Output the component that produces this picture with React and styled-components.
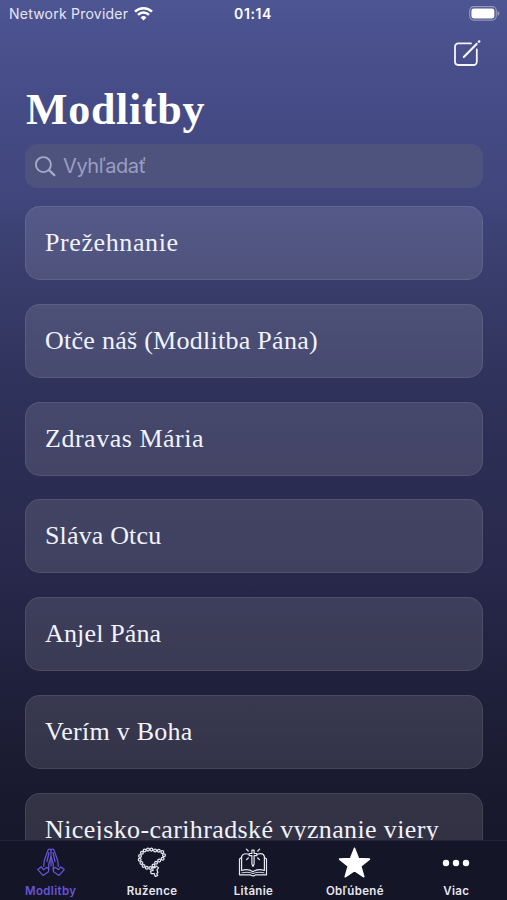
import styled, { createGlobalStyle } from 'styled-components'

const prayers = [
    { title: 'Prežehnanie', spacing: 0.6 },
    { title: 'Otče náš (Modlitba Pána)', spacing: 0.27 },
    { title: 'Zdravas Mária', spacing: 0.52 },
    { title: 'Sláva Otcu', spacing: 0.15 },
    { title: 'Anjel Pána', spacing: 0.15 },
    { title: 'Verím v Boha', spacing: 0.27 },
    { title: 'Nicejsko-carihradské vyznanie viery', spacing: 0.37 },
]

const tabs = [
    { label: 'Modlitby', Icon: HandsIcon, active: true },
    { label: 'Ružence', Icon: RosaryIcon },
    { label: 'Litánie', Icon: BookIcon },
    { label: 'Obľúbené', Icon: StarIcon },
    { label: 'Viac', Icon: DotsIcon },
]

export default function App() {
    return (
        <>
            <GlobalStyle />
            <Screen>
                <StatusBar>
                    <Carrier>
                        <span>Network Provider</span>
                        <WifiIcon />
                    </Carrier>
                    <Clock>01:14</Clock>
                    <Battery>
                        <BatteryIcon />
                    </Battery>
                </StatusBar>
                <NavBar>
                    <ComposeIcon />
                </NavBar>
                <Title>Modlitby</Title>
                <SearchField>
                    <SearchIcon />
                    <span>Vyhľadať</span>
                </SearchField>
                <PrayerList>
                    {prayers.map(prayer => (
                        <PrayerCard key={prayer.title} $spacing={prayer.spacing}>
                            <span>{prayer.title}</span>
                        </PrayerCard>
                    ))}
                </PrayerList>
                <TabBar>
                    {tabs.map(({ label, Icon, active }) => (
                        <Tab key={label} $active={active}>
                            <TabIcon>
                                <Icon />
                            </TabIcon>
                            <span>{label}</span>
                        </Tab>
                    ))}
                </TabBar>
            </Screen>
        </>
    )
}

function WifiIcon() {
    return (
        <svg width="19" height="15" viewBox="0 0 19 15" fill="none" stroke="#fff" strokeWidth="2.5">
            <path d="M1 5.6a12.2 12.2 0 0 1 17 0" />
            <path d="M4 8.8a7.8 7.8 0 0 1 11 0" />
            <path d="M9.5 14.4L6.6 11.4a4.1 4.1 0 0 1 5.8 0z" fill="#fff" stroke="none" />
        </svg>
    )
}

function BatteryIcon() {
    return (
        <svg width="31" height="15" viewBox="0 0 31 15">
            <rect x="0.7" y="0.7" width="26.6" height="13.4" rx="4" fill="none" stroke="#fff" strokeOpacity="0.4" strokeWidth="1.2" />
            <rect x="2.4" y="2.4" width="23" height="10" rx="2.3" fill="#fff" />
            <path d="M28.6 5v4.8c1-.4 1.7-1.3 1.7-2.4s-.7-2-1.7-2.4z" fill="#fff" fillOpacity="0.45" />
        </svg>
    )
}

function ComposeIcon() {
    return (
        <svg width="28" height="28" viewBox="0 0 28 28" fill="none" stroke="#f4f5ff" strokeWidth="1.8" strokeLinecap="round">
            <path d="M18 3.4H5.2a3.2 3.2 0 0 0-3.2 3.2v15.2a3.2 3.2 0 0 0 3.2 3.2h15.4a3.2 3.2 0 0 0 3.2-3.2V9.5" />
            <path d="M10.8 17L23.6 3.9" strokeWidth="2.2" />
            <path d="M25.9 1.7l.3-.3" strokeWidth="2.4" />
        </svg>
    )
}

function SearchIcon() {
    return (
        <svg width="21" height="21" viewBox="0 0 21 21" fill="none" stroke="#a5a9c8" strokeWidth="1.9" strokeLinecap="round">
            <circle cx="8.4" cy="8.6" r="7.5" />
            <path d="M14.1 14.2l5.2 5" strokeWidth="2.4" />
        </svg>
    )
}

function HandsIcon() {
    return (
        <svg width="30" height="30" viewBox="0 0 30 30" fill="none" stroke="currentColor" strokeWidth="1.25" strokeLinecap="round" strokeLinejoin="round">
            <path d="M15 3v16M15 3.200c-.9-1.500-2.700-1.300-3.200.4L8.300 13.500l-.6 5.800M15 3.200c.9-1.500 2.700-1.300 3.200.4l3.500 9.900.6 5.800" />
            <path d="M13 5.500L11 14.500M17 5.500l2 9M15 9.500l-2.300 8v5M15 9.500l2.300 8v5" />
            <path d="M5.300 19.800L1.800 22.600l5.200 5.800 5.500-3.600.2-3.200-2.300-1.200-3 2.300z" />
            <path d="M24.700 19.800l3.500 2.800-5.200 5.800-5.500-3.600-.2-3.200 2.300-1.200 3 2.300z" />
        </svg>
    )
}

const beads = [
    [14.4, 2.6], [18.1, 3.5], [21.8, 3.8], [25.3, 5.1], [27, 8.2],
    [25.6, 11.7], [22.2, 13.6], [19.1, 15.7], [16.5, 18.4], [13.4, 20.9], [9.8, 20.8],
    [6.6, 18.9], [4.4, 16], [2.7, 12.7], [3, 9], [4.9, 5.800],
    [7.600, 3.500], [11, 2.600],
]

function RosaryIcon() {
    return (
        <svg width="30" height="30" viewBox="0 0 30 30" fill="none" stroke="currentColor" strokeWidth="1.25" strokeLinejoin="round">
            {beads.map(([x, y]) => (
                <circle key={`${x}-${y}`} cx={x} cy={y} r="1.4" />
            ))}
            <path d="M15.6 20l2.2.8 1.7-1.7 2 1.8-1.6 1.9 1 2.7-1.2 1.1 1 1.9-2.400 1.100-1.200-3.100-3 .2-.6-2.500 2.600-.8z" />
        </svg>
    )
}

function BookIcon() {
    return (
        <svg width="30" height="30" viewBox="0 0 30 30" fill="none" stroke="currentColor" strokeWidth="1.2" strokeLinecap="round" strokeLinejoin="round">
            <path d="M10.500 7.200C7.500 6.200 4.500 6.800 3.600 9.500v14c3.800-1.300 8-1.200 11.400 1.300 3.400-2.500 7.600-2.600 11.400-1.300v-14c-.9-2.700-3.900-3.300-6.900-2.300" />
            <path d="M3.600 10.500L1.500 12v15.800h11c.6 1.300 4.400 1.300 5 0h11V12l-2.100-1.500" />
            <path d="M4 25.800c4.500-.8 7.800-.7 11 .8 3.200-1.500 6.500-1.600 11-.8" strokeWidth="0.900" />
            <path d="M13.900 3.200h2.200v3.300h2.700v2.200h-2.700V17L15 19.500 13.900 17V8.700h-2.700V6.500h2.700z" />
            <path d="M10.200 4L8.400 2.200M19.800 4l1.800-1.800M10.300 11l-1.700 1.700M19.700 11l1.700 1.700" />
        </svg>
    )
}

function StarIcon() {
    return (
        <svg width="33" height="32" viewBox="0 0 33 32" fill="#fff" stroke="#fff" strokeWidth="1.500" strokeLinejoin="round">
            <path d="M16.500 1.200l4 10.400 11 .5-8.700 7 3 10.700-9.300-6.100-9.300 6.100 3-10.700-8.700-7 11-.5z" />
        </svg>
    )
}

function DotsIcon() {
    return (
        <svg width="28" height="32" viewBox="0 0 28 32" fill="#fff">
            <circle cx="4" cy="16" r="3.200" />
            <circle cx="14" cy="16" r="3.200" />
            <circle cx="24" cy="16" r="3.200" />
        </svg>
    )
}

const GlobalStyle = createGlobalStyle`
    * {
        box-sizing: border-box;
    }
    body {
        margin: 0;
        overflow: hidden;
    }
    svg {
        display: block;
        flex-shrink: 0;
    }
`

const Screen = styled.div`
    width: 507px;
    height: 900px;
    display: flex;
    flex-direction: column;
    overflow: hidden;
    color: #ffffff;
    font-family: Inter, sans-serif;
    background: linear-gradient(#4d5592 0px, #464c87 95px, #41467d 190px, #373c69 290px, #2e3159 400px, #27284a 580px, #1b1b32 760px, #17172a 850px);
`

const StatusBar = styled.div`
    height: 28px;
    display: grid;
    grid-template-columns: 1fr auto 1fr;
    align-items: center;
    padding: 0 7px 0 9px;
`

const Carrier = styled.div`
    display: flex;
    align-items: center;
    gap: 6px;
    padding-bottom: 1px;
    font-size: 14px;
    letter-spacing: 0.23px;
    color: #e4e6f6;

    svg {
        margin-top: -1px;
    }
`

const Clock = styled.div`
    padding: 0 3px 1px 0;
    font-size: 14px;
    font-weight: 600;
    letter-spacing: 0.6px;
`

const Battery = styled.div`
    display: flex;
    justify-content: flex-end;
    padding-bottom: 1px;
`

const NavBar = styled.div`
    height: 54px;
    display: flex;
    justify-content: flex-end;
    padding: 12px 26px 0 0;
`

const Title = styled.h1`
    height: 62px;
    margin: 0;
    padding-left: 26px;
    font-family: Palatino, 'Liberation Serif', serif;
    font-size: 44px;
    font-weight: 700;
    line-height: 55px;
    letter-spacing: 0.7px;
`

const SearchField = styled.div`
    height: 44px;
    flex-shrink: 0;
    margin: 0 24px 0 25px;
    padding-left: 10px;
    display: flex;
    align-items: center;
    gap: 7px;
    border-radius: 12px;
    background-color: #4d537d;
    color: #9a9ec2;
    font-size: 20px;
    letter-spacing: -0.4px;
`

const PrayerList = styled.div`
    flex: 1;
    min-height: 0;
    overflow: hidden;
    display: flex;
    flex-direction: column;
    gap: 23.8px;
    padding: 18px 24px 0 25px;
`

const PrayerCard = styled.div`
    height: 74px;
    flex-shrink: 0;
    display: flex;
    align-items: center;
    padding: 0 19px;
    border: 1px solid rgba(255, 255, 255, 0.09);
    border-radius: 15px;
    background-color: rgba(255, 255, 255, 0.115);
    color: #f1f3ff;
    font-family: Palatino, 'Liberation Serif', serif;
    font-size: 26px;
    letter-spacing: ${props => props.$spacing}px;
    white-space: nowrap;
`

const TabBar = styled.div`
    height: 60px;
    flex-shrink: 0;
    display: grid;
    grid-template-columns: repeat(5, 1fr);
    border-top: 1px solid #222338;
    background-color: #141526;
`

const Tab = styled.div`
    display: flex;
    flex-direction: column;
    align-items: center;
    padding-top: 6px;
    color: ${props => (props.$active ? '#6754d6' : '#e6e7f0')};
    font-size: 11.5px;
    font-weight: 600;
    line-height: 16px;
    letter-spacing: 0.35px;
`

const TabIcon = styled.div`
    height: 36px;
    display: flex;
    align-items: flex-start;
`
